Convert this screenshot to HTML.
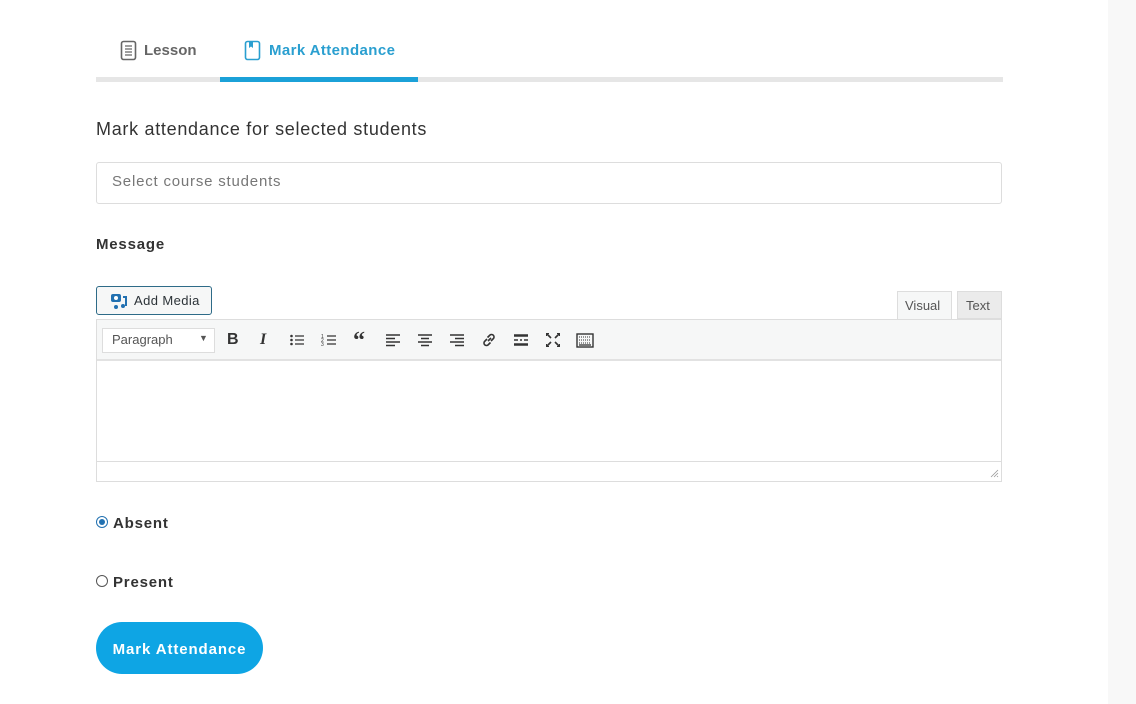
<!DOCTYPE html>
<html><head><meta charset="utf-8"><style>
*{box-sizing:border-box;margin:0;padding:0}
body{width:1136px;height:704px;background:#fff;font-family:"Liberation Sans",sans-serif;position:relative;overflow:hidden;color:#333}
.a{position:absolute}
.side{left:1108px;top:0;width:28px;height:704px;background:#f8f8f8}
.ic{position:absolute;top:331px;width:18px;height:18px}
</style></head><body>
<div class="a side"></div>

<svg class="a" style="left:120px;top:40px" width="18" height="22" viewBox="0 0 18 22"><rect x="1.5" y="1.5" width="14" height="18" rx="2" fill="none" stroke="#666" stroke-width="1.6"/><path d="M5 6h7M5 9h7M5 12h7M5 15h7" stroke="#666" stroke-width="1.3"/></svg>
<div class="a" style="left:144px;top:42px;font-size:15px;font-weight:bold;color:#666">Lesson</div>
<svg class="a" style="left:244px;top:40px" width="18" height="22" viewBox="0 0 18 22"><rect x="1.5" y="1.5" width="14" height="18" rx="2" fill="none" stroke="#2a9fd0" stroke-width="1.6"/><path d="M5 2v6l2-1.5L9 8V2" fill="#2a9fd0"/></svg>
<div class="a" style="left:269px;top:42px;font-size:15px;font-weight:bold;color:#2a9fd0;letter-spacing:0.4px">Mark Attendance</div>
<div class="a" style="left:96px;top:77px;width:907px;height:5px;background:#e6e6e6"></div>
<div class="a" style="left:220px;top:77px;width:198px;height:5px;background:#1ba1d8"></div>

<div class="a" style="left:96px;top:119px;font-size:18px;color:#333;letter-spacing:0.7px">Mark attendance for selected students</div>
<div class="a" style="left:96px;top:162px;width:906px;height:42px;border:1px solid #ddd;border-radius:3px"></div>
<div class="a" style="left:112px;top:173px;font-size:15px;color:#777;letter-spacing:0.8px">Select course students</div>
<div class="a" style="left:96px;top:236px;font-size:15px;font-weight:bold;color:#333;letter-spacing:0.8px">Message</div>

<div class="a" style="left:96px;top:286px;width:116px;height:29px;border:1px solid #2e6b88;border-radius:3px;background:#f6f7f7"></div>
<svg class="a" style="left:110px;top:292px" width="18" height="18" viewBox="0 0 18 18"><rect x="1" y="2" width="10" height="8" rx="2" fill="#2271b1"/><circle cx="6" cy="6" r="2" fill="#fff"/><path d="M13 5h3v9" stroke="#2271b1" stroke-width="2" fill="none"/><circle cx="13" cy="14" r="2" fill="#2271b1"/><circle cx="6" cy="15" r="2" fill="#2271b1"/></svg>
<div class="a" style="left:134px;top:293px;font-size:13px;color:#2c3338;letter-spacing:0.4px">Add Media</div>

<div class="a" style="left:897px;top:291px;width:55px;height:30px;background:#f6f7f7;border:1px solid #ddd;border-bottom:none"></div>
<div class="a" style="left:905px;top:298px;font-size:13px;color:#555">Visual</div>
<div class="a" style="left:957px;top:291px;width:45px;height:28px;background:#ebebeb;border:1px solid #ddd"></div>
<div class="a" style="left:966px;top:298px;font-size:13px;color:#555">Text</div>

<div class="a" style="left:96px;top:319px;width:906px;height:163px;border:1px solid #ddd"></div>
<div class="a" style="left:97px;top:320px;width:904px;height:41px;background:#f6f7f7;border-bottom:2px solid #e2e2e2"></div>
<div class="a" style="left:97px;top:461px;width:904px;height:1px;background:#ddd"></div>
<div class="a" style="left:102px;top:328px;width:113px;height:25px;background:#fff;border:1px solid #ddd"></div>
<div class="a" style="left:112px;top:332px;font-size:13px;color:#555">Paragraph</div>
<div class="a" style="left:199px;top:333px;font-size:9px;color:#555">▼</div>

<div class="a" style="left:227px;top:331px;font-size:16px;font-weight:bold;color:#333">B</div>
<div class="a" style="left:260px;top:331px;font-size:16px;font-style:italic;font-weight:bold;font-family:'Liberation Serif',serif;color:#333">I</div>
<svg class="ic" style="left:288px" viewBox="0 0 18 18"><path d="M7 5h9M7 9h9M7 13h9" stroke="#333" stroke-width="1.3"/><circle cx="3.5" cy="5" r="1.3" fill="#333"/><circle cx="3.5" cy="9" r="1.3" fill="#333"/><circle cx="3.5" cy="13" r="1.3" fill="#333"/></svg>
<svg class="ic" style="left:320px" viewBox="0 0 18 18"><path d="M7 5h9M7 9h9M7 13h9" stroke="#333" stroke-width="1.3"/><text x="1" y="7" font-size="5" fill="#333">1</text><text x="1" y="11" font-size="5" fill="#333">2</text><text x="1" y="15" font-size="5" fill="#333">3</text></svg>
<div class="a" style="left:353px;top:328px;font-size:24px;font-weight:bold;color:#333;font-family:'Liberation Serif',serif">“</div>
<svg class="ic" style="left:384px" viewBox="0 0 18 18"><path d="M2 4h14M2 7.5h9M2 11h14M2 14.5h9" stroke="#333" stroke-width="1.6"/></svg>
<svg class="ic" style="left:416px" viewBox="0 0 18 18"><path d="M2 4h14M5 7.5h8M2 11h14M5 14.5h8" stroke="#333" stroke-width="1.6"/></svg>
<svg class="ic" style="left:448px" viewBox="0 0 18 18"><path d="M2 4h14M7 7.5h9M2 11h14M7 14.5h9" stroke="#333" stroke-width="1.6"/></svg>
<svg class="ic" style="left:480px" viewBox="0 0 18 18"><path d="M8 10l3-3M7 8L4.5 10.5a2.5 2.5 0 003.5 3.5L10.5 11.5M11 10l2.5-2.5a2.5 2.5 0 00-3.5-3.5L7.5 6.5" stroke="#333" stroke-width="1.6" fill="none"/></svg>
<svg class="ic" style="left:512px" viewBox="0 0 18 18"><path d="M2 4.5h14" stroke="#333" stroke-width="2.5"/><path d="M2 9h4M8 9h2M12 9h4" stroke="#333" stroke-width="1.5"/><path d="M2 13.5h14" stroke="#333" stroke-width="2.5"/></svg>
<svg class="ic" style="left:544px" viewBox="0 0 18 18"><path d="M3 3l4 4M15 3l-4 4M3 15l4-4M15 15l-4-4" stroke="#333" stroke-width="1.6"/><path d="M2 2h3v1H3v2H2zM16 2h-3v1h2v2h1zM2 16h3v-1H3v-2H2zM16 16h-3v-1h2v-2h1z" fill="#333"/></svg>
<svg class="ic" style="left:576px" viewBox="0 0 18 18"><rect x="1" y="3" width="16" height="13" fill="none" stroke="#333" stroke-width="1.4"/><path d="M3 6h12M3 9h12M3 12h12" stroke="#333" stroke-width="1" stroke-dasharray="1 1"/><path d="M3 14h12" stroke="#333" stroke-width="1.3"/></svg>
<svg class="a" style="left:989px;top:468px" width="10" height="10" viewBox="0 0 10 10"><path d="M9 2L2 9M9 5L5 9M9 8L8 9" stroke="#999" stroke-width="0.8"/></svg>

<div class="a" style="left:96px;top:516px;width:12px;height:12px;border:1px solid #2271b1;border-radius:50%;background:#fff"></div>
<div class="a" style="left:99px;top:519px;width:6px;height:6px;border-radius:50%;background:#2271b1"></div>
<div class="a" style="left:113px;top:515px;font-size:15px;font-weight:bold;color:#333;letter-spacing:0.8px">Absent</div>
<div class="a" style="left:96px;top:575px;width:12px;height:12px;border:1px solid #555;border-radius:50%;background:#fff"></div>
<div class="a" style="left:113px;top:574px;font-size:15px;font-weight:bold;color:#333;letter-spacing:0.8px">Present</div>

<div class="a" style="left:96px;top:622px;width:167px;height:52px;border-radius:26px;background:#0ea5e4"></div>
<div class="a" style="left:96px;top:641px;width:167px;text-align:center;font-size:15px;font-weight:bold;color:#fff;letter-spacing:0.9px">Mark Attendance</div>
</body></html>
